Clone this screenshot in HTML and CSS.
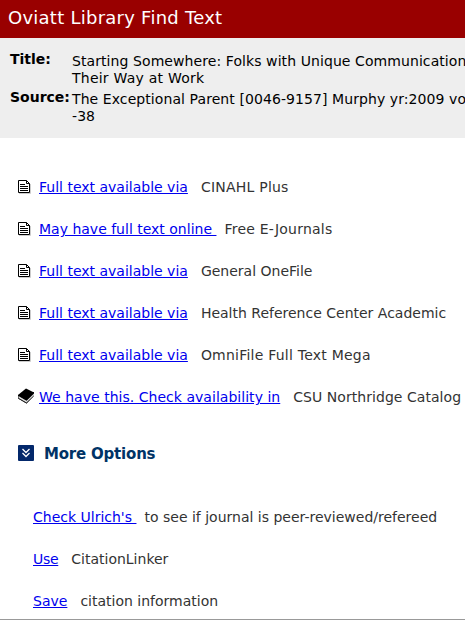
FILE: index.html
```
<!DOCTYPE html>
<html>
<head>
    <meta charset="utf-8">
    <title>Oviatt Library Find Text</title>
    <link rel="stylesheet" href="styles.css">
</head>
<body>
    <svg class="sprites" width="0" height="0">
        <symbol id="page" viewBox="0 0 13 14">
            <path d="M1 13.5h11.5V4" fill="none" stroke="#ccc"/>
            <path d="M.5 .5h8l3 3v9H.5z" fill="#fff" stroke="#000"/>
            <path d="M8.5 .5v3h3M2 4.5h5M2 6.5h8M2 8.5h8M2 10.5h8" fill="none" stroke="#000"/>
        </symbol>
    </svg>

    <h1>Oviatt Library Find Text</h1>

    <dl class="citation">
        <dt>Title:</dt>
        <dd class="title">Starting Somewhere: Folks with Unique Communication<br><span class="wide">Their Way at Work</span></dd>
        <dt>Source:</dt>
        <dd class="source">The Exceptional Parent [0046-9157] Murphy yr:2009 vol<br>-38</dd>
    </dl>

    <ul class="services">
        <li><svg class="icon"><use href="#page"/></svg><a class="via" href="#">Full text available via</a><span class="wide">CINAHL Plus</span></li>
        <li><svg class="icon"><use href="#page"/></svg><a class="online" href="#">May have full text online </a><span class="wide">Free E-Journals</span></li>
        <li><svg class="icon"><use href="#page"/></svg><a class="via" href="#">Full text available via</a><span>General OneFile</span></li>
        <li><svg class="icon"><use href="#page"/></svg><a class="via" href="#">Full text available via</a><span>Health Reference Center Academic</span></li>
        <li><svg class="icon"><use href="#page"/></svg><a class="via" href="#">Full text available via</a><span class="wide">OmniFile Full Text Mega</span></li>
        <li>
            <svg class="icon book" viewBox="0 0 16 16">
                <path d="M0 7v3.500l8.500 5 7.500-8V4z" fill="#000"/>
                <path d="M.5 8l8 4.800 7.500-7.300v2.200l-7.500 7-8-4.500z" fill="#ddd"/>
                <path d="M0 7l8-6.500L16 4.500l-7.500 7.800z" fill="#000"/>
                <path d="M.5 10.300l8 4.700 7.200-7" fill="none" stroke="#222" stroke-width=".9"/>
            </svg><a class="have" href="#">We have this. Check availability in</a><span class="catalog">CSU Northridge Catalog</span>
        </li>
    </ul>

    <h2>
        <svg class="toggle" viewBox="0 0 16 16">
            <rect width="16" height="16" rx="1" fill="#03286b"/>
            <path d="M4.500 4l3.500 3.500L11.500 4M4.500 8l3.500 3.500L11.500 8" fill="none" stroke="#fff" stroke-width="1.300"/>
        </svg>
        More Options
    </h2>

    <ul class="options">
        <li><a class="check" href="#">Check Ulrich's </a><span>to see if journal is peer-reviewed/refereed</span></li>
        <li><a class="use" href="#">Use</a><span>CitationLinker</span></li>
        <li><a href="#">Save</a><span>citation information</span></li>
    </ul>
</body>
</html>
```

FILE: styles.css
```
body {
    margin: 0;
    overflow: hidden;
    background-color: #fff;
    color: #333;
    font: 14px/18px Verdana, "DejaVu Sans", sans-serif;
}

.sprites {
    display: none;
}

h1 {
    margin: 0;
    padding: 0 8px 2px;
    background-color: #990000;
    color: #fff;
    font-size: 18px;
    font-weight: normal;
    letter-spacing: 0.25px;
    line-height: 36px;
}

.citation {
    display: grid;
    grid-template-columns: 62px auto;
    row-gap: 2px;
    height: 87px;
    margin: 0;
    padding: 13px 0 0 10px;
    align-content: start;
    background-color: #eee;
    color: #000;
    white-space: nowrap;
}

dt {
    font-weight: bold;
    line-height: 16px;
}

dd {
    margin: 0;
    padding-top: 2px;
    letter-spacing: 0.08px;
    line-height: 17px;
}

ul {
    margin: 0;
    padding: 0;
    list-style: none;
}

li {
    display: flex;
    height: 18px;
    margin-bottom: 24px;
    white-space: pre;
}

li span {
    margin-left: 13px;
}

.wide {
    letter-spacing: 0.23px;
}

.catalog {
    letter-spacing: 0.05px;
}

a {
    color: #0000ee;
}

.have {
    letter-spacing: 0.03px;
}

.use {
    letter-spacing: -0.3px;
}

.services {
    padding: 40px 0 0 18px;
}

.icon {
    flex: none;
    width: 13px;
    height: 14px;
    margin: 2px 8px 0 0;
}

.book {
    width: 16px;
    height: 16px;
    margin: 0 5px 0 0;
}

.online + span,
.check + span {
    margin-left: 8px;
}

h2 {
    display: flex;
    align-items: center;
    gap: 10px;
    height: 20px;
    margin: 38px 0 44px 18px;
    color: #003366;
    font-size: 15px;
    letter-spacing: -0.2px;
}

.toggle {
    width: 16px;
    height: 16px;
    margin-top: -2px;
}

.options {
    padding: 0 0 9px 33px;
    border-bottom: 1px solid #999;
}

.options li:last-child {
    margin-bottom: 0;
}
```
